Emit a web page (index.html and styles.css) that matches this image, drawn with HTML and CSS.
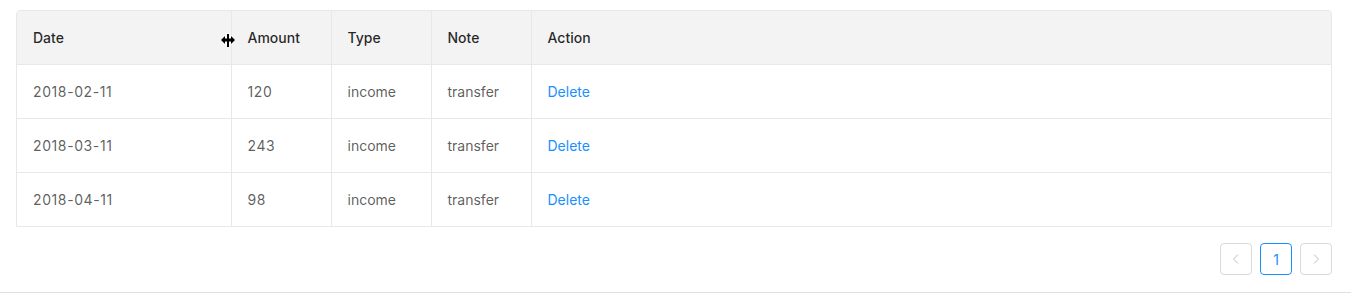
FILE: index.html
```html
<!DOCTYPE html>
<html>
<head>
<meta charset="utf-8">
<link rel="stylesheet" href="styles.css">
</head>
<body>
<div class="page">
  <div class="table-wrap">
    <table class="table">
      <colgroup>
        <col class="c-date"><col class="c-amount"><col class="c-type"><col class="c-note"><col>
      </colgroup>
      <thead>
        <tr>
          <th class="resizable">Date
            <svg class="cursor" width="18" height="16" viewBox="0 0 18 16">
              <path d="M7.5 1h3v4h1v-2.5l5 5.5-5 5.5v-2.5h-1v4h-3v-4h-1v2.5l-5-5.5 5-5.5v2.5h1z" fill="#fff"/>
              <path d="M8 2h2v13h-2z" fill="#000"/>
              <path d="M2 8l4-4v2.5h6v-2.5l4 4-4 4v-2.5h-6v2.5z" fill="#000"/>
            </svg>
          </th>
          <th>Amount</th>
          <th>Type</th>
          <th>Note</th>
          <th>Action</th>
        </tr>
      </thead>
      <tbody>
        <tr><td class="num">2018-02-11</td><td class="num">120</td><td>income</td><td>transfer</td><td><a class="link">Delete</a></td></tr>
        <tr><td class="num">2018-03-11</td><td class="num">243</td><td>income</td><td>transfer</td><td><a class="link">Delete</a></td></tr>
        <tr><td class="num">2018-04-11</td><td class="num">98</td><td>income</td><td>transfer</td><td><a class="link">Delete</a></td></tr>
      </tbody>
    </table>
  </div>
  <ul class="pagination">
    <li class="pg-item disabled">
      <svg width="12" height="12" viewBox="0 0 12 12"><path d="M8 1.5L3.5 6 8 10.5" fill="none" stroke="currentColor" stroke-width="1"/></svg>
    </li>
    <li class="pg-item active">1</li>
    <li class="pg-item disabled">
      <svg width="12" height="12" viewBox="0 0 12 12"><path d="M4 1.5L8.5 6 4 10.5" fill="none" stroke="currentColor" stroke-width="1"/></svg>
    </li>
  </ul>
</div>
<div class="bottom-line"></div>
</body>
</html>
```

FILE: styles.css
```css
html, body {
  margin: 0;
  padding: 0;
  background: #fff;
}
body {
  font-family: Inter, "Liberation Sans", Arial, sans-serif;
  font-size: 14px;
  color: rgba(0, 0, 0, 0.65);
}
.page {
  padding: 10px 19px 0 16px;
  height: 282px;
  box-sizing: border-box;
}
.table-wrap {
  border: 1px solid #e8e8e8;
  border-radius: 4px 4px 0 0;
  overflow: hidden;
}
.table {
  width: 100%;
  border-collapse: collapse;
  table-layout: fixed;
}
.c-date { width: 214px; }
.c-amount { width: 100px; }
.c-type { width: 100px; }
.c-note { width: 100px; }
.table th, .table td {
  text-align: left;
  padding: 16px;
  line-height: 21px;
  border-right: 1px solid #e8e8e8;
  border-bottom: 1px solid #e8e8e8;
}
.table th:last-child, .table td:last-child {
  border-right: none;
}
.table tbody tr:last-child td {
  border-bottom: none;
}
.table th {
  background: #f3f3f3;
  color: rgba(0, 0, 0, 0.85);
  font-weight: 500;
}
.num {
  letter-spacing: 0.6px;
}
.resizable {
  position: relative;
}
.cursor {
  position: absolute;
  right: -6px;
  top: 21px;
}
.link {
  color: #1890ff;
  cursor: pointer;
}
.pagination {
  list-style: none;
  margin: 16px 0 0;
  padding: 0;
  display: flex;
  justify-content: flex-end;
  gap: 8px;
}
.pg-item {
  width: 32px;
  height: 32px;
  box-sizing: border-box;
  border: 1px solid #d9d9d9;
  border-radius: 4px;
  display: flex;
  align-items: center;
  justify-content: center;
  font-size: 14px;
  color: rgba(0, 0, 0, 0.65);
}
.pg-item.disabled {
  color: rgba(0, 0, 0, 0.25);
}
.pg-item.active {
  border-color: #1890ff;
  color: #1890ff;
}
.bottom-line {
  height: 0;
  border-top: 1px solid #e0e0e0;
  margin-top: 10px;
}
```
